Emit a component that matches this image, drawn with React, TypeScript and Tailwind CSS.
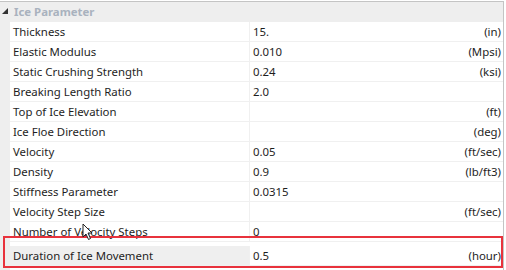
import React from 'react';

interface Row {
  name: string;
  value: string;
  unit: string;
}

const rows: Row[] = [
  { name: 'Thickness', value: '15.', unit: '(in)' },
  { name: 'Elastic Modulus', value: '0.010', unit: '(Mpsi)' },
  { name: 'Static Crushing Strength', value: '0.24', unit: '(ksi)' },
  { name: 'Breaking Length Ratio', value: '2.0', unit: '' },
  { name: 'Top of Ice Elevation', value: '', unit: '(ft)' },
  { name: 'Ice Floe Direction', value: '', unit: '(deg)' },
  { name: 'Velocity', value: '0.05', unit: '(ft/sec)' },
  { name: 'Density', value: '0.9', unit: '(lb/ft3)' },
  { name: 'Stiffness Parameter', value: '0.0315', unit: '' },
  { name: 'Velocity Step Size', value: '', unit: '(ft/sec)' },
  { name: 'Number of Velocity Steps', value: '0', unit: '' },
];

function GridRow({ row, selected }: { row: Row; selected?: boolean }) {
  return (
    <div className="flex h-[20px] border-b border-[#f0f0f0]">
      <div className={`flex w-[239px] items-center pl-[3px] ${selected ? 'bg-[#efefef]' : 'bg-white'}`}>
        {row.name}
      </div>
      <div className="w-[1px] bg-[#f0f0f0]" />
      <div className="flex flex-1 items-center justify-between bg-white pl-[3px] pr-[2px]">
        <span>{row.value}</span>
        <span>{row.unit}</span>
      </div>
    </div>
  );
}

export default function App() {
  return (
    <div
      className="relative h-[270px] w-[506px] overflow-hidden bg-white text-[11.4px] text-[#1e1e1e]"
      style={{ fontFamily: '"Noto Sans", "Segoe UI", sans-serif' }}
    >
      <div className="mt-[1px] mr-[2px] flex h-[269px] border-t border-r border-[#c4c4c4]">
        <div className="w-[10px] bg-[#eeeeee]" />
        <div className="flex flex-1 flex-col">
          <div className="flex h-[20px] items-center bg-[#eeeeee] pl-[4px] font-bold text-[#a9b2be]">
            Ice Parameter
          </div>
          {rows.map((r) => (
            <GridRow key={r.name} row={r} />
          ))}
          <div className="h-[4px]" />
          <GridRow row={{ name: 'Duration of Ice Movement', value: '0.5', unit: '(hour)' }} selected />
        </div>
      </div>
      {/* tree toggle */}
      <svg className="absolute left-[1px] top-[7px]" width="8" height="8" viewBox="0 0 8 8">
        <path d="M7 1 L7 7 L1 7 Z" fill="#333" />
      </svg>
      {/* highlight box */}
      <div className="pointer-events-none absolute left-[3px] top-[236px] h-[32px] w-[500px] border-2 border-[#e8323c]" />
      {/* mouse cursor */}
      <svg className="absolute left-[82px] top-[223px]" width="12" height="18" viewBox="0 0 12 18">
        <path d="M1 1 L1 14 L4 11 L6.5 16.5 L8.5 15.5 L6 10 L10 10 Z" fill="#fff" stroke="#222" strokeWidth="1" strokeLinejoin="round" />
      </svg>
    </div>
  );
}
